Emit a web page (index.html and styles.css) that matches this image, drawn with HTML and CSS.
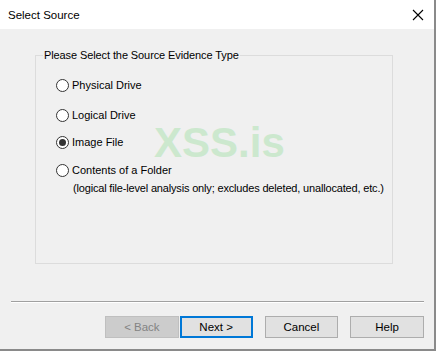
FILE: index.html
```
<!DOCTYPE html>
<html>
<head>
<meta charset="utf-8">
<link rel="stylesheet" href="styles.css">
</head>
<body>
<div class="window">
  <div class="titlebar">
    <span class="title">Select Source</span>
    <svg class="close" width="12" height="12" viewBox="0 0 12 12"><path d="M1 1 L11 11 M11 1 L1 11" stroke="#000" stroke-width="1.1" fill="none"/></svg>
  </div>
  <div class="main">
    <div class="group">
      <span class="legend">Please Select the Source Evidence Type</span>
      <div class="row first"><span class="radio"></span><span class="label">Physical Drive</span></div>
      <div class="row second"><span class="radio"></span><span class="label">Logical Drive</span></div>
      <div class="row third"><span class="radio checked"></span><span class="label">Image File</span></div>
      <div class="row"><span class="radio"></span><span class="label">Contents of a Folder</span></div>
      <div class="note">(logical file-level analysis only; excludes deleted, unallocated, etc.)</div>
      <span class="watermark">XSS.is</span>
    </div>
    <div class="separator"></div>
    <div class="buttons">
      <button class="btn disabled">&lt; Back</button>
      <button class="btn default">Next &gt;</button>
      <button class="btn spaced">Cancel</button>
      <button class="btn spaced">Help</button>
    </div>
  </div>
</div>
</body>
</html>
```
FILE: styles.css
```
html, body {
  margin: 0;
  padding: 0;
}
body {
  background: #f0f0f0;
  font-family: "Liberation Sans", Arial, sans-serif;
  font-size: 11px;
  color: #000;
}
.window {
  width: 434px;
  height: 349px;
  background: #f0f0f0;
  border-right: 2px solid #8a8a8a;
  border-bottom: 2px solid #8a8a8a;
  display: flex;
  flex-direction: column;
}
.titlebar {
  height: 29px;
  background: #fff;
  display: flex;
  align-items: center;
  justify-content: space-between;
  padding: 0 10px 0 8px;
}
.title {
  font-size: 11.5px;
  line-height: 14px;
}
.close {
  display: block;
}
.main {
  flex: 1;
  display: flex;
  flex-direction: column;
}
.group {
  position: relative;
  margin: 26px 0 0 35px;
  width: 358px;
  height: 209px;
  border: 1px solid #dcdcdc;
  padding: 21px 0 0 20px;
  box-sizing: border-box;
  display: flex;
  flex-direction: column;
}
.legend {
  position: absolute;
  top: -8px;
  left: 7px;
  padding: 0 1px;
  background: #f0f0f0;
  line-height: 15px;
  white-space: nowrap;
  letter-spacing: -0.1px;
}
.row {
  display: flex;
  align-items: center;
  height: 16px;
  margin-top: 12px;
  white-space: nowrap;
}
.row.first {
  margin-top: 0;
}
.row.second {
  margin-top: 14px;
}
.row.third {
  margin-top: 11px;
}
.radio {
  width: 13px;
  height: 13px;
  box-sizing: border-box;
  border: 1px solid #333;
  border-radius: 50%;
  background: #fff;
  display: flex;
  align-items: center;
  justify-content: center;
  flex: none;
}
.radio.checked::after {
  content: "";
  width: 7px;
  height: 7px;
  border-radius: 50%;
  background: #333;
}
.label {
  margin-left: 3px;
}
.note {
  margin: 2px 0 0 17px;
  line-height: 16px;
  white-space: nowrap;
  letter-spacing: -0.17px;
}
.watermark {
  position: absolute;
  left: 118px;
  top: 66px;
  font-size: 42px;
  line-height: 42px;
  font-weight: bold;
  color: #cce8ce;
}
.separator {
  margin: 37px 10px 0 11px;
  height: 1px;
  background: #a0a0a0;
  border-bottom: 1px solid #fff;
}
.buttons {
  display: flex;
  margin: 13px 10px 0 105px;
}
.btn {
  width: 74px;
  height: 22px;
  box-sizing: border-box;
  border: 1px solid #adadad;
  background: #e1e1e1;
  font-family: "Liberation Sans", Arial, sans-serif;
  font-size: 11.5px;
  color: #000;
  padding: 0;
  margin: 0;
}
.btn.disabled {
  background: #cccccc;
  border-color: #bfbfbf;
  color: #838383;
}
.btn.default {
  margin-left: 1px;
  border: 2px solid #0078d7;
  width: 73px;
}
.btn.spaced {
  margin-left: 12px;
}
```
